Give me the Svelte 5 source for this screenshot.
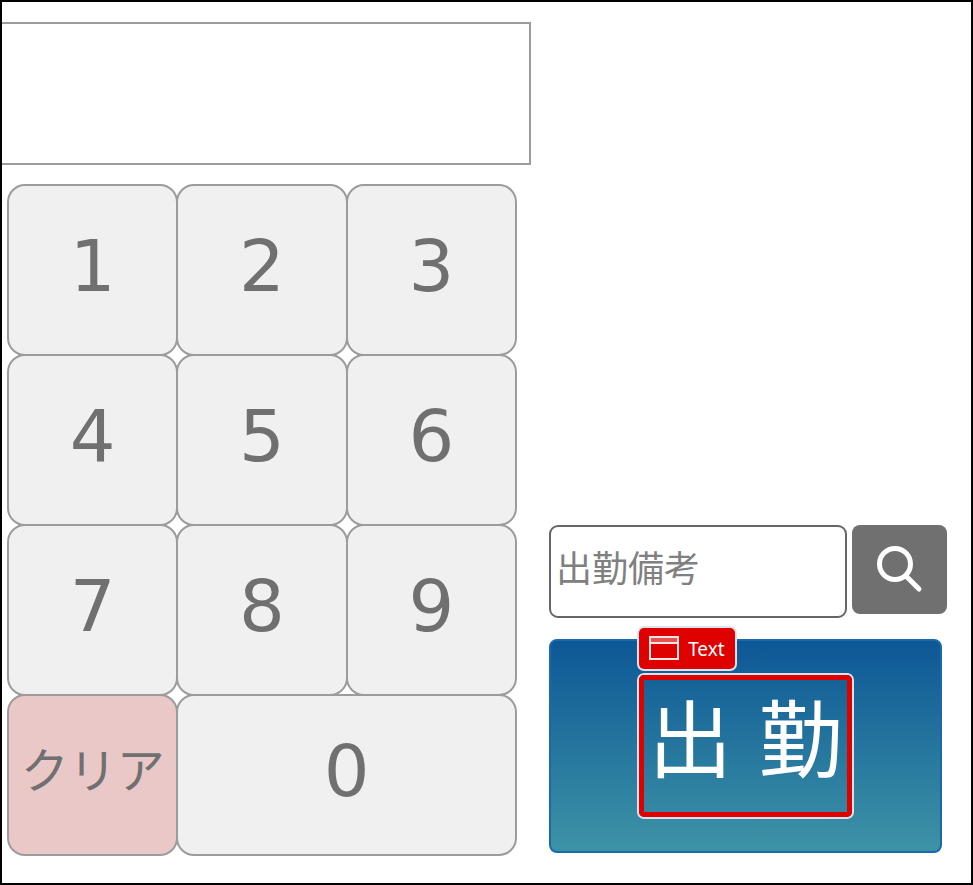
<script>
  const digits = ['1', '2', '3', '4', '5', '6', '7', '8', '9']

  let code = $state('')
  let note = $state('')

  const press = (digit) => (code += digit)
  const clear = () => (code = '')
</script>

<main>
  <section class="entry">
    <input class="display" type="text" aria-label="社員番号" readonly value={code} />
    <div class="keypad">
      {#each digits as digit}
        <button type="button" onclick={() => press(digit)}>{digit}</button>
      {/each}
      <button type="button" class="clear" onclick={clear}>クリア</button>
      <button type="button" class="zero" onclick={() => press('0')}>0</button>
    </div>
  </section>

  <section class="actions">
    <form class="note" onsubmit={(e) => e.preventDefault()}>
      <input type="text" aria-label="出勤備考" placeholder="出勤備考" bind:value={note} />
      <button type="submit" aria-label="検索">
        <svg viewBox="0 0 48 48" width="48" height="48" fill="none" stroke="#fff" stroke-width="5" stroke-linecap="round">
          <circle cx="19" cy="18" r="15.5" />
          <path d="M30 30L43 43" />
        </svg>
      </button>
    </form>
    <button type="button" class="clock-in">
      <span class="target">
        <span class="tag">
          <svg viewBox="0 0 30 25" width="30" height="25" fill="none" stroke="#ffe4e4" stroke-width="2">
            <path d="M1 1h28v6H1z" fill="#e65050" stroke="none" />
            <rect x="1" y="1" width="28" height="22" />
            <path d="M1 7h28" />
          </svg>
          Text
        </span>
        出 勤
      </span>
    </button>
  </section>
</main>

<style>
  :global(body) {
    background: #fff;
  }

  main {
    --gray: #9c9c9c;
    --dark: #707070;
    box-sizing: border-box;
    min-height: 100vh;
    display: grid;
    grid-template-columns: 529fr 398fr;
    gap: 18px;
    padding: 20px 24px 27px 0;
    border: 2px solid #000;
    font-family: 'DejaVu Sans', 'Noto Sans CJK JP', sans-serif;
  }

  button,
  input {
    box-sizing: border-box;
    margin: 0;
    font-family: inherit;
  }

  button {
    cursor: pointer;
  }

  .entry {
    display: flex;
    flex-direction: column;
    gap: 19px;
    min-width: 0;
  }

  .display {
    width: 100%;
    height: 143px;
    padding: 0 16px;
    border: 2px solid var(--gray);
    border-left: 0;
    background: #fff;
    color: var(--dark);
    font-size: 72px;
    text-align: right;
    outline: none;
  }

  /* neighbouring keys share one border line */
  .keypad {
    display: grid;
    grid-template-columns: repeat(3, 1fr);
    grid-template-rows: repeat(3, 170px) 162px;
    margin: 0 16px 0 5px;
  }

  .keypad button {
    margin: 0 -2px -2px 0;
    padding: 0 0 8px;
    border: 2px solid var(--gray);
    border-radius: 18px;
    background: #f0f0f0;
    color: var(--dark);
    font-size: 72px;
    line-height: 80px;
  }

  .keypad .clear {
    margin-bottom: 0;
    background: #ebc8c8;
    font-size: 48px;
  }

  .keypad .zero {
    grid-column: span 2;
    margin-bottom: 0;
  }

  .actions {
    display: flex;
    flex-direction: column;
    justify-content: flex-end;
    gap: 21px;
    min-width: 0;
    padding-bottom: 3px;
  }

  .note {
    display: flex;
    align-items: flex-start;
    gap: 5px;
  }

  .note input {
    flex: 1;
    min-width: 0;
    height: 93px;
    padding: 0 5px 5px;
    border: 2px solid #666;
    border-radius: 9px;
    background: #fff;
    color: var(--dark);
    font-size: 36px;
  }

  .note input::placeholder {
    color: #808080;
    opacity: 1;
  }

  .note button {
    display: flex;
    align-items: center;
    justify-content: center;
    width: 95px;
    height: 89px;
    padding: 0;
    border: 0;
    border-radius: 8px;
    background: var(--dark);
  }

  .clock-in {
    display: flex;
    align-items: center;
    justify-content: center;
    height: 214px;
    margin-right: 5px;
    padding: 0;
    border: 2px solid #1b69ad;
    border-radius: 8px;
    background: linear-gradient(#0d5796, #3d93a6);
    color: #fff;
    font-size: 84px;
  }

  .target {
    position: relative;
    padding: 0 4px 8px;
    border: 5px solid #df0000;
    border-radius: 5px;
    box-shadow: 0 0 0 2px #dce3ea;
    line-height: 124px;
  }

  .tag {
    position: absolute;
    left: -5px;
    bottom: 100%;
    display: flex;
    align-items: center;
    gap: 9px;
    height: 41px;
    margin-bottom: 11px;
    padding: 0 10px;
    border-radius: 5px;
    background: #df0000;
    box-shadow: 0 0 0 2px #dce3ea;
    font-family: 'Noto Sans', sans-serif;
    font-size: 19px;
    line-height: 24px;
  }
</style>
